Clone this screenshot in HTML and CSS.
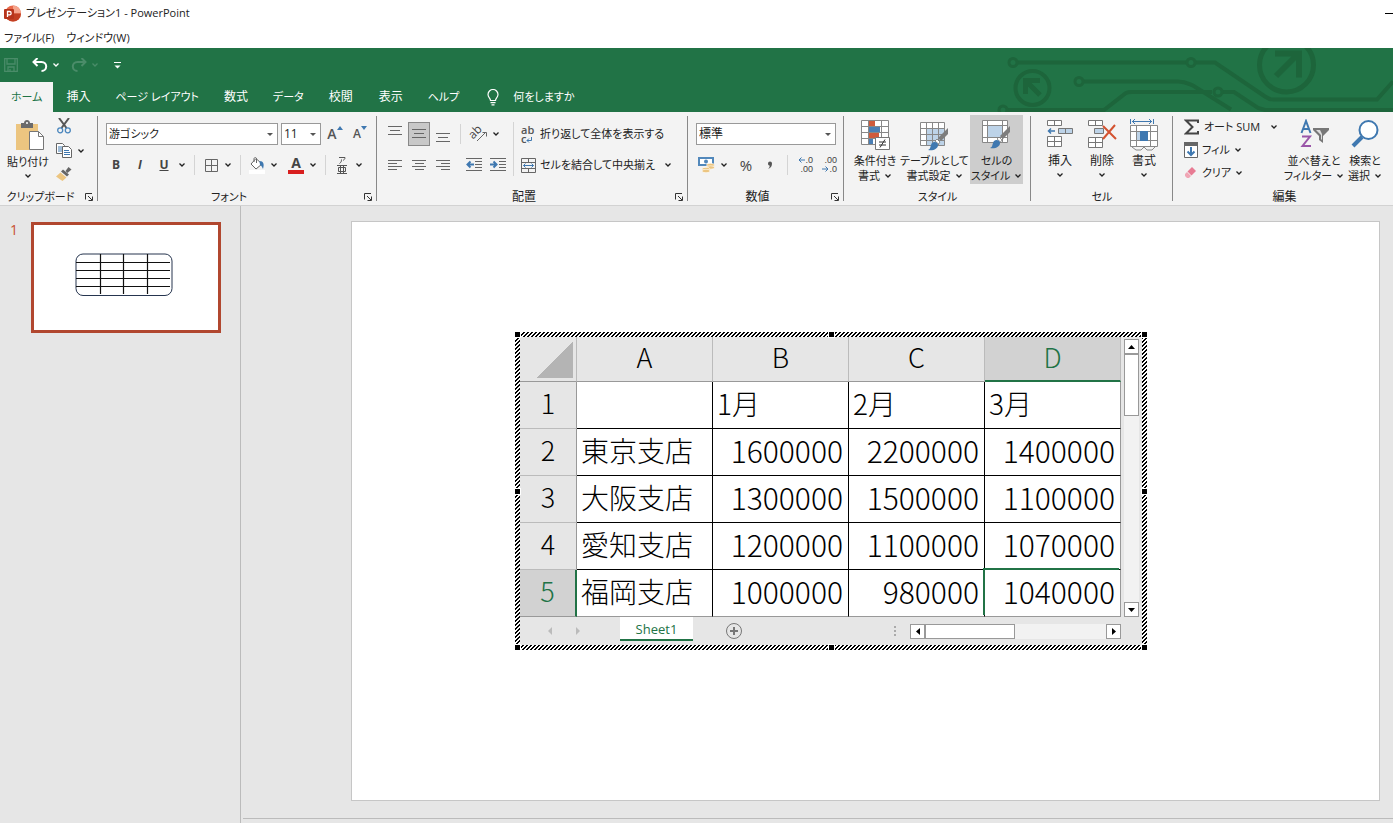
FILE: index.html
```html
<!DOCTYPE html>
<html lang="ja">
<head>
  <meta charset="utf-8">
  <meta name="viewport" content="width=device-width,initial-scale=1">
  <title>プレゼンテーション1 - PowerPoint</title>
  <link rel="stylesheet" href="styles.css">
</head>
<body>
  <!-- shared glyphs -->
  <svg class="defs" aria-hidden="true">
    <symbol id="chev" viewBox="0 0 8 8"><path d="M1.500 2.500 4 5l2.500-2.500" fill="none" stroke="currentColor" stroke-width="1.300"/></symbol>
    <symbol id="launch" viewBox="0 0 10 10"><path d="M1.500 7.500V1.500H8M4 4l4 4M8.500 4.500v4h-4" fill="none" stroke="#333"/></symbol>
    <symbol id="brush" viewBox="0 0 22 24"><path d="M21 1v6L14 14l-3-3z" fill="#7d7d7d"/><path d="m10 12 3 3-1.500 2-3.500-3z" fill="#fff" stroke="#666" stroke-width=".7"/><path d="M1 23c3-1 2-4 4-7 2-2 6-1 6 2 0 4-5 6-10 5z" fill="#3f78b0"/></symbol>
  </svg>

  <header>
    <div class="title-bar">
      <svg width="17" height="17" viewBox="0 0 17 17">
        <circle cx="9" cy="8.500" r="8" fill="#e8694a"/><path d="M9 .5a8 8 0 0 1 8 8H9z" fill="#f5a48c"/><path d="M1 8.500h16a8 8 0 0 1-16 0z" fill="#c23f22"/>
        <rect x="0" y="4" width="10" height="10" rx="1" fill="#b7341b"/><path d="M3.500 12V6.500h2a1.600 1.600 0 0 1 0 3.300h-2" fill="none" stroke="#fff" stroke-width="1.300"/>
      </svg>
      <span class="title">プレゼンテーション1 - PowerPoint</span>
      <button class="minimize" title="最小化"></button>
    </div>
    <nav class="menu-bar">
      <a href="#">ファイル(F)</a>
      <a href="#">ウィンドウ(W)</a>
    </nav>
  </header>

  <div class="banner">
    <svg class="circuit" width="403" height="64" viewBox="0 0 403 64" fill="none" stroke="#1d653b" stroke-width="4">
      <path d="M27 14.500h170M205 14.500h20l50 34c3 2 5 3 8 3h104l16-18M93 33.500h95c7 0 10 2 15 4l38 24M16 62h98l22-17c2-1 4-1 6-1h80M232 44h12l24 16 7 2h128"/>
      <g stroke-width="3"><circle cx="23" cy="14.500" r="4"/><circle cx="201" cy="14.500" r="4"/><circle cx="89" cy="33.500" r="4"/><circle cx="228" cy="44" r="4"/><circle cx="13" cy="62" r="4"/></g>
      <circle cx="42.500" cy="40" r="17"/><circle cx="296.500" cy="17" r="27" stroke-width="5"/>
      <path d="M50 47 37 34M35.500 46V32.500H50" stroke-width="5"/><path d="m286 28 21-21M285 5.500h24v24" stroke-width="6"/>
    </svg>
    <div class="quick-access">
      <button title="保存" class="faded"><svg width="14" height="14" viewBox="0 0 14 14" fill="none" stroke="currentColor" stroke-width="1.300"><path d="M.7.7h12.600v12.600H.7zM3 .7v5.300h8V.7M4 13V9h6v4M6 13v-2"/></svg></button>
      <button title="元に戻す" class="undo"><svg width="16" height="14" viewBox="0 0 16 14" fill="none" stroke="currentColor" stroke-width="2"><path d="M5.500 0 1.500 4l4 4M2 4h7.500c6.500 0 6 9 0 9"/></svg></button>
      <button title="元に戻す履歴"><svg class="chev"><use href="#chev"/></svg></button>
      <button title="やり直し" class="faded redo"><svg width="16" height="14" viewBox="0 0 16 14" fill="none" stroke="currentColor" stroke-width="2"><path d="m10.500 0 4 4-4 4M14 4H6.500c-6.500 0-6 9 0 9"/></svg></button>
      <button title="やり直し履歴" class="faded"><svg class="chev"><use href="#chev"/></svg></button>
      <button title="カスタマイズ" class="customize"><svg width="7" height="9" viewBox="0 0 7 9"><path d="M0 1.500h7" stroke="#fff"/><path d="M.5 4.500h6l-3 3z" fill="#fff"/></svg></button>
    </div>
    <nav class="tabs">
      <a href="#" class="tab active">ホーム</a>
      <a href="#" class="tab kanji">挿入</a>
      <a href="#" class="tab">ページ レイアウト</a>
      <a href="#" class="tab kanji">数式</a>
      <a href="#" class="tab">データ</a>
      <a href="#" class="tab kanji">校閲</a>
      <a href="#" class="tab kanji">表示</a>
      <a href="#" class="tab">ヘルプ</a>
      <a href="#" class="tab tell-me"><svg width="12" height="17" viewBox="0 0 12 17" fill="none" stroke="#fff" stroke-width="1.200"><path d="M3.500 11.500c0-2.500-2.500-3-2.500-6a5 5 0 0 1 10 0c0 3-2.500 3.500-2.500 6zM3.500 13.700h5M4.500 15.800h3"/></svg>何をしますか</a>
    </nav>
  </div>

  <div class="ribbon">
    <section class="group clipboard">
      <div class="tools">
        <button class="big">
          <svg width="30" height="32" viewBox="0 0 30 32"><path d="M1 4h22v26H1z" fill="#ecc580"/><path d="M6 3h3c0-4 6-4 6 0h3v5H6z" fill="#6b6b6b"/><circle cx="12" cy="3" r="1" fill="#fff"/><path d="M14.500 11.500h9l5 5v13h-14z" fill="#fff" stroke="#777"/><path d="M23.500 11.500v5h5" fill="none" stroke="#777"/></svg>
          <span>貼り付け</span><svg class="chev"><use href="#chev"/></svg>
        </button>
        <div class="stack">
          <button title="切り取り"><svg width="14" height="16" viewBox="0 0 14 16" fill="none"><path d="m2 0 7.500 10M12 0 4.500 10" stroke="#555" stroke-width="2"/><circle cx="3.200" cy="12.300" r="2.500" stroke="#4a86bd" stroke-width="1.300"/><circle cx="10.800" cy="12.300" r="2.500" stroke="#4a86bd" stroke-width="1.300"/></svg></button>
          <button title="コピー"><svg width="16" height="15" viewBox="0 0 16 15" fill="#fff" stroke="#666"><path d="M.5.5h6l2 2v8h-8z"/><path d="M2 4h4M2 6h4M2 8h4" stroke="#3f78b0"/><path d="M6.500 3.500h6l3 3v8h-9z"/><path d="M8 7.500h5M8 9.500h6M8 11.500h6" stroke="#3f78b0"/></svg></button>
          <button title="書式のコピー"><svg width="16" height="14" viewBox="0 0 16 14"><path d="m12.500 0 3 2.500-4 3.500-2-2z" fill="#666"/><path d="m7 2.500 6 5-2 2-6-5z" fill="#666"/><path d="m4.500 5.500 6 5-4 3.500c-2-1-4-3-6.500-4.500z" fill="#ecc580"/></svg></button>
        </div>
        <button title="コピーのオプション" class="copy-more"><svg class="chev"><use href="#chev"/></svg></button>
      </div>
      <div class="caption"><span>クリップボード</span><button title="クリップボード"><svg width="10" height="10"><use href="#launch"/></svg></button></div>
    </section>

    <section class="group font">
      <div class="rows">
        <div class="row combos">
          <label class="combo family"><select aria-label="フォント"><option>游ゴシック</option></select></label>
          <label class="combo size"><select aria-label="フォント サイズ"><option>11</option></select></label>
          <button class="grow" title="拡大">A<svg width="6" height="4"><path d="M0 4h6L3 0z" fill="#3f78b0"/></svg></button>
          <button class="shrink" title="縮小">A<svg width="6" height="4"><path d="M0 0h6L3 4z" fill="#3f78b0"/></svg></button>
        </div>
        <div class="row format">
          <button class="glyph"><b>B</b></button>
          <button class="glyph"><b><i>I</i></b></button>
          <button class="glyph"><b><u>U</u></b></button>
          <button class="more" title="下線"><svg class="chev"><use href="#chev"/></svg></button>
          <i class="sep"></i>
          <button class="glyph" title="罫線"><svg width="13" height="13" viewBox="0 0 13 13" fill="none" stroke="#666"><path d="M.5.5h12v12H.5zM6.500.5v12M.5 6.500h12"/></svg></button>
          <button class="more" title="罫線の種類"><svg class="chev"><use href="#chev"/></svg></button>
          <i class="sep"></i>
          <button class="glyph" title="塗りつぶし"><svg width="16" height="17" viewBox="0 0 16 17"><path d="M7 1.500 13 7l-6 5-5-5zM5 5V2c0-2 2.500-2 2.500 0v4" fill="#fff" stroke="#666"/><path d="M10.500 4c4 0 5 3 3.500 8-1-2-1-3-3-4z" fill="#3f78b0"/><path d="M0 13h16v4H0z" fill="#fff"/></svg></button>
          <button class="more" title="塗りつぶしの色"><svg class="chev"><use href="#chev"/></svg></button>
          <button class="glyph color" title="フォントの色"><b>A</b></button>
          <button class="more" title="フォントの色一覧"><svg class="chev"><use href="#chev"/></svg></button>
          <i class="sep"></i>
          <button class="glyph ruby" title="ふりがな"><svg width="10" height="17" viewBox="0 0 10 17" fill="none" stroke="#555"><path d="M2 .5h6c0 2-1 2-2 3M4.500 2.500c0 2-.5 3-2 4M0 8.500h10M0 16.500h10M1.500 10.500h7v4h-7zM3.500 8.500v8M6.500 8.500v8"/></svg></button>
          <button class="more" title="ふりがなの設定"><svg class="chev"><use href="#chev"/></svg></button>
        </div>
      </div>
      <div class="caption"><span>フォント</span><button title="フォントの設定"><svg width="10" height="10"><use href="#launch"/></svg></button></div>
    </section>

    <section class="group align">
      <div class="tools">
        <div class="rows">
          <div class="row">
            <button class="glyph" title="上揃え"><svg width="14" height="16" stroke="#666"><path d="M0 .5h14M2 4.500h10M0 8.500h14"/></svg></button>
            <button class="glyph pressed" title="上下中央揃え"><svg width="14" height="16" stroke="#666"><path d="M0 3.500h14M2 7.500h10M0 11.500h14"/></svg></button>
            <button class="glyph" title="下揃え"><svg width="14" height="16" stroke="#666"><path d="M0 7.500h14M2 11.500h10M0 15.500h14"/></svg></button>
            <i class="sep"></i>
            <button class="glyph orientation" title="方向"><span>ab</span><svg width="11" height="11" viewBox="0 0 11 11" fill="none" stroke="#666"><path d="m0 10 9-9M5.500 1.500h4v4"/></svg></button>
            <button class="more" title="方向の種類"><svg class="chev"><use href="#chev"/></svg></button>
          </div>
          <div class="row">
            <button class="glyph" title="左揃え"><svg width="14" height="12" stroke="#666"><path d="M0 1.500h14M0 4.500h9M0 7.500h14M0 10.500h9"/></svg></button>
            <button class="glyph" title="中央揃え"><svg width="14" height="12" stroke="#666"><path d="M0 1.500h14M3 4.500h9M0 7.500h14M3 10.500h9"/></svg></button>
            <button class="glyph" title="右揃え"><svg width="14" height="12" stroke="#666"><path d="M0 1.500h14M5 4.500h9M0 7.500h14M5 10.500h9"/></svg></button>
            <button class="glyph indent" title="インデントを減らす"><svg width="16" height="14" viewBox="0 0 16 14"><path d="M0 .5h16M9 3.500h7M9 6.500h7M9 9.500h7M0 12.500h16" stroke="#666"/><path d="M8 6.500H2M4.500 3.500l-3 3 3 3" fill="none" stroke="#3f78b0" stroke-width="2"/></svg></button>
            <button class="glyph" title="インデントを増やす"><svg width="16" height="14" viewBox="0 0 16 14"><path d="M0 .5h16M9 3.500h7M9 6.500h7M9 9.500h7M0 12.500h16" stroke="#666"/><path d="M0 6.500h6M3.500 3.500l3 3-3 3" fill="none" stroke="#3f78b0" stroke-width="2"/></svg></button>
          </div>
        </div>
        <i class="sep tall"></i>
        <div class="rows wide">
          <div class="row"><button class="labelled"><span class="wrap-icon"><span>ab</span><span>c<svg width="6" height="6" viewBox="0 0 6 6" fill="none" stroke="#3f78b0"><path d="M5.500 0v3.500H1M3 1.500l-2 2 2 2"/></svg></span></span>折り返して全体を表示する</button></div>
          <div class="row"><button class="labelled merge"><svg width="15" height="15" viewBox="0 0 15 15" fill="none" stroke="#666"><path d="M.5.5h14v14H.5zM.5 4.500h14M.5 10.500h14M7.500.5v4M7.500 10.500v4"/><path d="M2.500 7.500h10M4.500 5.500l-2 2 2 2M10.500 5.500l2 2-2 2" stroke="#3f78b0"/></svg>セルを結合して中央揃え</button><button class="more" title="結合の種類"><svg class="chev"><use href="#chev"/></svg></button></div>
        </div>
      </div>
      <div class="caption"><span class="kanji">配置</span><button title="配置の設定"><svg width="10" height="10"><use href="#launch"/></svg></button></div>
    </section>

    <section class="group number">
      <div class="rows">
        <div class="row combos"><label class="combo kanji"><select aria-label="表示形式"><option>標準</option></select></label></div>
        <div class="row">
          <button class="glyph" title="通貨"><svg width="17" height="16" viewBox="0 0 17 16"><path d="M0 0h16v9H0z" fill="#5288bb"/><path d="M2 2h12v5H2z" fill="#fff"/><circle cx="8" cy="4.500" r="2" fill="#5288bb"/><g fill="#ecc580" stroke="#fff" stroke-width=".6"><ellipse cx="12.500" cy="8" rx="4" ry="1.700"/><ellipse cx="12.500" cy="10.500" rx="4" ry="1.700"/><ellipse cx="8" cy="12" rx="4" ry="1.700"/><ellipse cx="8" cy="14" rx="4" ry="1.700"/></g></svg></button>
          <button class="more" title="通貨の種類"><svg class="chev"><use href="#chev"/></svg></button>
          <button class="glyph percent">%</button>
          <button class="glyph comma" title="桁区切り"><svg width="6" height="9"><path d="M1 2.500a2 2 0 0 1 4 0C5 5 4 7 1 8c1-1 2-2 1.500-3.500C1.500 4.500 1 3.500 1 2.500z" fill="#555"/></svg></button>
          <i class="sep"></i>
          <button class="glyph decimal" title="小数点以下の表示桁数を増やす"><span><svg width="7" height="6" viewBox="0 0 7 6" fill="none" stroke="#3f78b0"><path d="M7 3H1M3.500.5 1 3l2.500 2.500"/></svg>.0</span><span>.00</span></button>
          <button class="glyph decimal" title="小数点以下の表示桁数を減らす"><span>.00</span><span><svg width="7" height="6" viewBox="0 0 7 6" fill="none" stroke="#3f78b0"><path d="M0 3h6M3.500.5 6 3 3.500 5.500"/></svg>.0</span></button>
        </div>
      </div>
      <div class="caption"><span class="kanji">数値</span><button title="表示形式の設定"><svg width="10" height="10"><use href="#launch"/></svg></button></div>
    </section>

    <section class="group styles">
      <div class="tools">
        <button class="big">
          <svg width="31" height="32" viewBox="0 0 31 32"><path d="M1.500 1.500h27v24h-27zM1.500 7.500h27M1.500 13.500h27M1.500 19.500h27M8.500 1.500v24M21.500 1.500v24" fill="#fff" stroke="#888"/><path d="M9 2h6v5H9zM9 14h10v5H9z" fill="#cf5b3c"/><path d="M9 8h11v5H9zM9 20h4v5H9z" fill="#4a7fb5"/><path d="M15.500 18.500h14v12h-14z" fill="#fff" stroke="#777"/><path d="M19 23h7M19 26h7M25 20.500l-5 8" stroke="#333"/></svg>
          <span>条件付き</span><span>書式<svg class="chev"><use href="#chev"/></svg></span>
        </button>
        <button class="big table-format">
          <svg width="31" height="32" viewBox="0 0 31 32"><path d="M1.500 3.500h24v23h-24z" fill="#fff"/><path d="M8 9h18v18H8z" fill="#bdd3e8"/><path d="M1.500 3.500h24v23h-24zM1.500 9.500h24M1.500 15.500h24M1.500 21.500h24M7.500 3.500v23M13.500 3.500v23M19.500 3.500v23" fill="none" stroke="#888"/><use href="#brush" x="8" y="8" width="22" height="24"/></svg>
          <span>テーブルとして</span><span>書式設定<svg class="chev"><use href="#chev"/></svg></span>
        </button>
        <button class="big selected">
          <svg width="31" height="32" viewBox="0 0 31 32"><path d="M1.500 1.500h25v22h-25z" fill="#fff"/><path d="M7 7h15v11H7z" fill="#bdd3e8"/><path d="M1.500 1.500h25v22h-25zM1.500 6.500h25M1.500 18.500h25M6.500 1.500v22M21.500 1.500v22" fill="none" stroke="#888"/><use href="#brush" x="8" y="6" width="22" height="24"/></svg>
          <span>セルの</span><span>スタイル<svg class="chev"><use href="#chev"/></svg></span>
        </button>
      </div>
      <div class="caption"><span>スタイル</span></div>
    </section>

    <section class="group cells">
      <div class="tools">
        <button class="big kanji">
          <svg width="28" height="32" viewBox="0 0 28 32" fill="#fff" stroke="#777"><path d="M1.500 1.500h14v5h-14zM8.500 1.500v5M1.500 17.500h14v10h-14zM8.500 17.500v10M1.500 22.500h14"/><path d="M12.500 9.500h14v5h-14zM19.500 9.500v5" fill="#bdd3e8"/><path d="M9 12H3M5 9.500 2.500 12 5 14.500" fill="none" stroke="#3f78b0" stroke-width="1.500"/></svg>
          <span>挿入</span><svg class="chev"><use href="#chev"/></svg>
        </button>
        <button class="big kanji">
          <svg width="30" height="32" viewBox="0 0 30 32" fill="#fff" stroke="#777"><path d="M1.500 1.500h14v5h-14zM8.500 1.500v5M1.500 18.500h14v10h-14zM8.500 18.500v10M1.500 23.500h14"/><path d="M7.500 9.500h9v5h-9z" fill="#bdd3e8"/><path d="m16 7 13 13M28 6 16 20" stroke="#d35230" stroke-width="2"/></svg>
          <span>削除</span><svg class="chev"><use href="#chev"/></svg>
        </button>
        <button class="big kanji">
          <svg width="30" height="32" viewBox="0 0 30 32" fill="none"><path d="M1.500 6.500h27v21h-27z" fill="#fff"/><path d="M1.500 6.500h27v21h-27zM1.500 12.500h27M1.500 21.500h27M7.500 6.500v21M21.500 6.500v21M3 28l4 3h5l3-3 3 3h5l3-3" stroke="#888"/><path d="M8 13h6v8H8z" fill="#bdd3e8"/><path d="M11 12h8v10h-8z" fill="#3f78b0"/><path d="M1.500 0v5M24.500 0v5M3 2.500h20M6 0 3.500 2.500 6 5M20 0l2.500 2.500L20 5" stroke="#3f78b0"/></svg>
          <span>書式</span><svg class="chev"><use href="#chev"/></svg>
        </button>
      </div>
      <div class="caption"><span>セル</span></div>
    </section>

    <section class="group editing">
      <div class="tools">
        <div class="list">
          <button class="labelled"><svg width="16" height="16" viewBox="0 0 16 16" fill="none" stroke="#444" stroke-width="2"><path d="M14 4V1.500H2L8.500 8 2 14.500h12V12"/></svg>オート SUM<svg class="chev autosum"><use href="#chev"/></svg></button>
          <button class="labelled"><svg width="14" height="16" viewBox="0 0 14 16"><path d="M.5.5h13v15H.5z" fill="#fff" stroke="#666"/><path d="M0 0h14v4H0z" fill="#666"/><path d="M7 5v8M3.500 9.500 7 13l3.500-3.500" fill="none" stroke="#3f78b0" stroke-width="2"/></svg>フィル<svg class="chev"><use href="#chev"/></svg></button>
          <button class="labelled"><svg width="14" height="14" viewBox="0 0 14 14"><path d="m8 1 4 4-4.500 4.500-4-4z" fill="#e87b93"/><path d="m3 6 4 4-2 2H3L1 10V8z" fill="#f0a6b5"/></svg>クリア<svg class="chev"><use href="#chev"/></svg></button>
        </div>
        <button class="big">
          <svg width="31" height="32" viewBox="0 0 31 32" fill="none" stroke-width="2"><path d="m2.500 14 4.500-12 4.500 12M4 10h6" stroke="#3f78b0"/><path d="M3 17.500h8L3.500 27H12" stroke="#9a55a8"/><path d="M14 9h16v2l-6 6v7l-4-3v-4l-6-6z" fill="#777"/><path d="M17 11h4l2 4v6l-1-1v-4z" fill="#ddd"/></svg>
          <span>並べ替えと</span><span>フィルター<svg class="chev"><use href="#chev"/></svg></span>
        </button>
        <button class="big">
          <svg width="28" height="32" viewBox="0 0 28 32"><circle cx="17.500" cy="11" r="9" fill="#fff" stroke="#3f78b0" stroke-width="2"/><path d="M11 18 2 27" stroke="#3f78b0" stroke-width="4"/></svg>
          <span>検索と</span><span>選択<svg class="chev"><use href="#chev"/></svg></span>
        </button>
      </div>
      <div class="caption"><span class="kanji">編集</span></div>
    </section>
  </div>

  <main>
    <aside class="thumbnails">
      <span class="slide-number">1</span>
      <a href="#" class="thumbnail" title="スライド 1">
        <svg viewBox="0 0 98 44" fill="none" stroke="#111"><rect x="1" y="1" width="96" height="41.500" rx="7" stroke="#26354f"/><path d="M1 9.500h94M1 17.500h94M1 25.500h94M1 33.500h94M25.500 1v40M48.500 1v40M72.500 1v40" stroke-width="1.200"/></svg>
      </a>
    </aside>
    <div class="workspace">
      <div class="slide">
        <div class="embed">
          <i class="handle nw"></i><i class="handle n"></i><i class="handle ne"></i><i class="handle w"></i>
          <i class="handle e"></i><i class="handle sw"></i><i class="handle s"></i><i class="handle se"></i>
          <div class="sheet">
            <table>
              <thead>
                <tr><th class="corner"></th><th>A</th><th>B</th><th>C</th><th class="current">D</th></tr>
              </thead>
              <tbody>
                <tr><th>1</th><td></td><td>1月</td><td>2月</td><td>3月</td></tr>
                <tr><th>2</th><td>東京支店</td><td class="num">1600000</td><td class="num">2200000</td><td class="num">1400000</td></tr>
                <tr><th>3</th><td>大阪支店</td><td class="num">1300000</td><td class="num">1500000</td><td class="num">1100000</td></tr>
                <tr><th>4</th><td>愛知支店</td><td class="num">1200000</td><td class="num">1100000</td><td class="num">1070000</td></tr>
                <tr><th class="current">5</th><td>福岡支店</td><td class="num">1000000</td><td class="num">980000</td><td class="num cursor">1040000</td></tr>
              </tbody>
            </table>
            <div class="scroll vertical">
              <button title="上へ"><svg width="7" height="4"><path d="M0 4h7L3.500 0z"/></svg></button>
              <span class="thumb"></span>
              <button class="end" title="下へ"><svg width="7" height="4"><path d="M0 0h7L3.500 4z"/></svg></button>
            </div>
            <div class="sheet-bar">
              <button class="nav" title="前のシート"><svg width="4" height="8"><path d="M4 0v8L0 4z" fill="#bbb"/></svg></button>
              <button class="nav" title="次のシート"><svg width="4" height="8"><path d="M0 0v8l4-4z" fill="#bbb"/></svg></button>
              <a href="#" class="sheet-tab">Sheet1</a>
              <button class="add" title="新しいシート"><svg width="16" height="16" fill="none" stroke="#777"><circle cx="8" cy="8" r="7.500"/><path d="M8 4v8M4 8h8" stroke-width="2"/></svg></button>
              <svg class="grip" width="3" height="11" fill="#aaa"><path d="M0 0h2v2H0zM0 4h2v2H0zM0 8h2v2H0z"/></svg>
              <div class="scroll horizontal">
                <button title="左へ"><svg width="4" height="7"><path d="M4 0v7L0 3.500z"/></svg></button>
                <span class="thumb"></span>
                <button class="end" title="右へ"><svg width="4" height="7"><path d="M0 0v7l4-3.500z"/></svg></button>
              </div>
            </div>
          </div>
        </div>
      </div>
    </div>
  </main>
</body>
</html>
```
FILE: styles.css
```css
:root {
  --green: #217346;
  --ribbon: #f3f3f3;
  --gray: #e6e6e6;
}
* {
  box-sizing: border-box;
}
body {
  margin: 0;
  min-height: 100vh;
  display: flex;
  flex-direction: column;
  font: 11px/16px "Open Sans", "Noto Sans CJK JP", sans-serif;
  font-feature-settings: "palt";
  color: #222;
  background: var(--gray);
  overflow: hidden;
}
a {
  color: inherit;
  text-decoration: none;
}
button {
  padding: 0;
  border: none;
  background: none;
  color: inherit;
  font: inherit;
  font-feature-settings: inherit;
  white-space: nowrap;
  display: flex;
  align-items: center;
  justify-content: center;
}
svg {
  flex: none;
}
.defs {
  position: absolute;
  width: 0;
  height: 0;
}
.chev {
  width: 8px;
  height: 8px;
}

/* title and menu */
header {
  background: #fff;
}
.title-bar {
  display: flex;
  align-items: center;
  height: 26px;
  padding-left: 4px;
  gap: 5px;
}
.title {
  flex: 1;
}
.minimize {
  width: 8px;
  height: 1px;
  background: #000;
}
.menu-bar {
  display: flex;
  align-items: center;
  gap: 12px;
  height: 22px;
  padding: 1px 0 0 4px;
}

/* green banner */
.banner {
  position: relative;
  background: var(--green);
  color: #fff;
}
.circuit {
  position: absolute;
  top: 0;
  right: 0;
}
.quick-access {
  display: flex;
  align-items: center;
  height: 34px;
  padding-left: 4px;
}
.faded {
  color: #4a8c69;
}
.undo {
  margin: 0 4px 0 14px;
}
.redo {
  margin: 0 4px 0 11px;
}
.customize {
  margin-left: 15px;
}
.tabs {
  display: flex;
  position: relative;
  height: 30px;
}
.tab {
  display: flex;
  align-items: center;
  padding: 0 13px;
}
.tab:not(.kanji) {
  padding: 0 12px;
}
.tab.active {
  padding: 0 11px;
  color: var(--green);
  background: var(--ribbon);
}
.tab.tell-me {
  gap: 14px;
  padding-left: 16px;
}
.kanji {
  font-size: 12px;
}

/* ribbon */
.ribbon {
  display: flex;
  height: 94px;
  background: var(--ribbon);
  border-bottom: 1px solid #d2d2d2;
}
.group {
  position: relative;
  display: flex;
  flex-direction: column;
  flex: none;
}
.group:not(:last-child)::after {
  content: "";
  position: absolute;
  top: 4px;
  right: 0;
  bottom: 4px;
  width: 1px;
  background: #888;
}
.clipboard { width: 98px; }
.font { width: 279px; }
.align { width: 311px; }
.number { width: 156px; }
.styles { width: 187px; }
.cells { width: 142px; }
.editing { flex: 1; }
.tools,
.group > .rows {
  display: flex;
  flex: 1;
}
.caption {
  display: flex;
  height: 16px;
}
.caption span {
  flex: 1;
  text-align: center;
}
.caption button {
  width: 16px;
  margin-right: 1px;
}
.rows {
  display: flex;
  flex-direction: column;
  gap: 7px;
  padding: 10px 0 0 6px;
}
.row {
  display: flex;
  align-items: center;
  height: 24px;
}
.glyph {
  width: 24px;
  height: 24px;
  color: #444;
  font-size: 12px;
}
.more {
  width: 12px;
  height: 24px;
}
.sep {
  width: 1px;
  height: 20px;
  margin: 0 5px;
  background: #d4d4d4;
}
.sep.tall {
  height: 54px;
  margin: 10px 0 0 3px;
}
.pressed {
  width: 22px;
  margin: 0 1px;
  border: 1px solid #888;
  background: #c8c8c8;
}
.big {
  flex-direction: column;
  justify-content: flex-start;
  padding-top: 4px;
  height: 69px;
  line-height: 15px;
}
.big > svg:first-child {
  margin-bottom: 2px;
}
.big span {
  display: flex;
  align-items: center;
  gap: 4px;
}
.big > .chev {
  margin-top: 3px;
}
.labelled {
  gap: 4px;
}

.clipboard .big {
  width: 56px;
  margin-top: 4px;
}
.clipboard .big > svg:first-child {
  margin-left: 4px;
}
.stack {
  display: flex;
  flex-direction: column;
  justify-content: space-between;
  padding: 6px 0 8px;
}
.copy-more {
  width: 18px;
}

.combos {
  gap: 3px;
  padding-left: 2px;
}
.combo {
  position: relative;
  width: 140px;
  height: 22px;
}
.combo.family {
  width: 172px;
}
.combo.size {
  width: 40px;
}
.combo::after {
  content: "";
  position: absolute;
  top: 10px;
  right: 5px;
  border: 3px solid transparent;
  border-top-color: #555;
  border-bottom: none;
}
.combo select {
  width: 100%;
  height: 100%;
  padding: 0 2px;
  appearance: none;
  border: 1px solid #999;
  border-radius: 0;
  background: #fff;
  color: #222;
  font: inherit;
  font-feature-settings: inherit;
}
.combo.size select {
  font-size: 12px;
}
.grow,
.shrink {
  width: 22px;
  align-items: flex-start;
  color: #555;
  font-size: 14px;
  font-weight: 600;
}
.shrink {
  font-size: 12px;
}
.color b {
  width: 16px;
  font-size: 14px;
  line-height: 14px;
  border-bottom: 4px solid #d81e1e;
}
.format .sep {
  margin: 0 5px 0 6px;
}
.format .sep + .glyph,
.format .more + .glyph {
  width: 22px;
}
.format .more + .glyph {
  margin-left: 5px;
}
.orientation span {
  transform: rotate(-45deg);
  line-height: 12px;
  margin: 0 -4px 4px 0;
}
.orientation svg {
  margin: 4px 0 0 -1px;
}
.indent {
  margin-left: 7px;
}
.wide {
  padding-left: 7px;
}
.wrap-icon {
  display: flex;
  flex-direction: column;
  width: 15px;
  font: 600 11px/9px "Open Sans", sans-serif;
  color: #555;
  text-align: left;
}
.merge {
  margin-right: 7px;
}
.percent {
  font-size: 15px;
  margin-left: 4px;
}
.decimal {
  flex-direction: column;
  align-items: flex-end;
  padding-right: 4px;
  font: 9px/9px "Liberation Sans", sans-serif;
}

.styles .tools {
  padding: 3px 0 0 7px;
  gap: 2px;
}
.styles .big {
  width: 48px;
}
.styles .table-format {
  width: 67px;
}
.styles .selected {
  width: 53px;
  background: #cdcdcd;
}
.cells .tools {
  padding: 3px 0 0 8px;
}
.cells .big {
  width: 42px;
}
.editing .tools {
  padding: 3px 8px 0 11px;
}
.list {
  display: flex;
  flex-direction: column;
  align-items: flex-start;
  gap: 7px;
  width: 102px;
  padding-top: 4px;
}
.autosum {
  margin-left: 6px;
}
.editing .big {
  width: 56px;
}
.editing .big:last-child {
  width: 46px;
}

/* slide area */
main {
  display: flex;
  flex: 1;
}
.thumbnails {
  display: flex;
  align-items: flex-start;
  width: 241px;
  padding: 16px 0 0 10px;
  border-right: 1px solid #bbb;
}
.slide-number {
  width: 21px;
  color: #c8502f;
  font-size: 14px;
}
.thumbnail {
  display: flex;
  align-items: center;
  justify-content: center;
  width: 190px;
  height: 111px;
  border: 3px solid #b1472f;
  background: #fff;
}
.thumbnail svg {
  width: 98px;
  margin: 0 5px 5px 0;
}
.workspace {
  flex: 1;
  margin: 0 0 4px 2px;
  padding: 15px 13px 17px 108px;
  border-bottom: 1px solid #bbb;
}
.slide {
  position: relative;
  height: 100%;
  border: 1px solid #c6c6c6;
  background: #fff;
}
.embed {
  position: absolute;
  top: 110px;
  left: 163px;
  padding: 5px;
  background: linear-gradient(135deg, #000 30%, #fff 30% 50%, #000 50% 80%, #fff 80%) 0 0 / 4px 4px;
}
.handle {
  position: absolute;
  width: 5px;
  height: 5px;
  background: #000;
  outline: 1px solid #fff;
}
.nw, .n, .ne { top: 0; }
.sw, .s, .se { bottom: 0; }
.nw, .w, .sw { left: 0; }
.ne, .e, .se { right: 0; }
.n, .s { left: calc(50% - 2px); }
.w, .e { top: calc(50% - 2px); }
.sheet {
  display: grid;
  grid-template-columns: auto 21px;
  background: var(--gray);
}
table {
  border-collapse: separate;
  border-spacing: 0;
  table-layout: fixed;
  width: 601px;
  font: 300 28px/38px "Noto Sans CJK JP", sans-serif;
  font-feature-settings: normal;
  color: #000;
}
th {
  height: 47px;
  padding: 0 0 4px;
  border-right: 1px solid #999;
  border-bottom: 1px solid #bbb;
  background: var(--gray);
  font-weight: 300;
}
thead th {
  height: 45px;
  border-right-color: #bbb;
  border-bottom-color: #999;
  font-size: 27px;
}
.corner {
  width: 57px;
  background: linear-gradient(135deg, transparent 50%, #b4b4b4 50%) 16px 5px / 37px 36px no-repeat var(--gray);
}
tbody th {
  font-size: 27px;
}
td {
  height: 47px;
  padding: 0 5px 4px 4px;
  border-right: 1px solid #000;
  border-bottom: 1px solid #000;
  background: #fff;
  white-space: nowrap;
}
td:last-child {
  border-right-color: #999;
}
tbody tr:last-child > * {
  border-bottom-color: #999;
}
.num {
  font-size: 30px;
  text-align: right;
}
th.current {
  color: var(--green);
  background: #d2d2d2;
}
thead .current {
  border-bottom: 2px solid var(--green);
}
tbody .current {
  border-right: 2px solid var(--green);
}
.cursor {
  box-shadow: -2px -2px 0 var(--green);
  position: relative;
}
.scroll {
  display: flex;
  background: #f2f2f2;
}
.scroll button,
.thumb {
  width: 15px;
  height: 15px;
  border: 1px solid #999;
  background: #fff;
}
.vertical {
  flex-direction: column;
  width: 15px;
  margin: 2px 0 0 3px;
}
.vertical .thumb {
  height: 62px;
}
.vertical .end {
  margin-top: auto;
}
.horizontal .end {
  margin-left: auto;
}
.horizontal {
  width: 211px;
  margin-left: 13px;
}
.horizontal .thumb {
  width: 90px;
}
.sheet-bar {
  grid-column: 1 / -1;
  display: flex;
  align-items: center;
  height: 28px;
  padding-right: 21px;
}
.nav {
  width: 28px;
}
.nav:first-child {
  margin-left: 16px;
}
.sheet-tab {
  align-self: flex-start;
  width: 73px;
  height: 24px;
  margin-left: 28px;
  border-bottom: 2px solid var(--green);
  background: #fff;
  color: var(--green);
  font-size: 13px;
  line-height: 24px;
  text-align: center;
}
.add {
  margin-left: 33px;
}
.grip {
  margin-left: auto;
}
```
